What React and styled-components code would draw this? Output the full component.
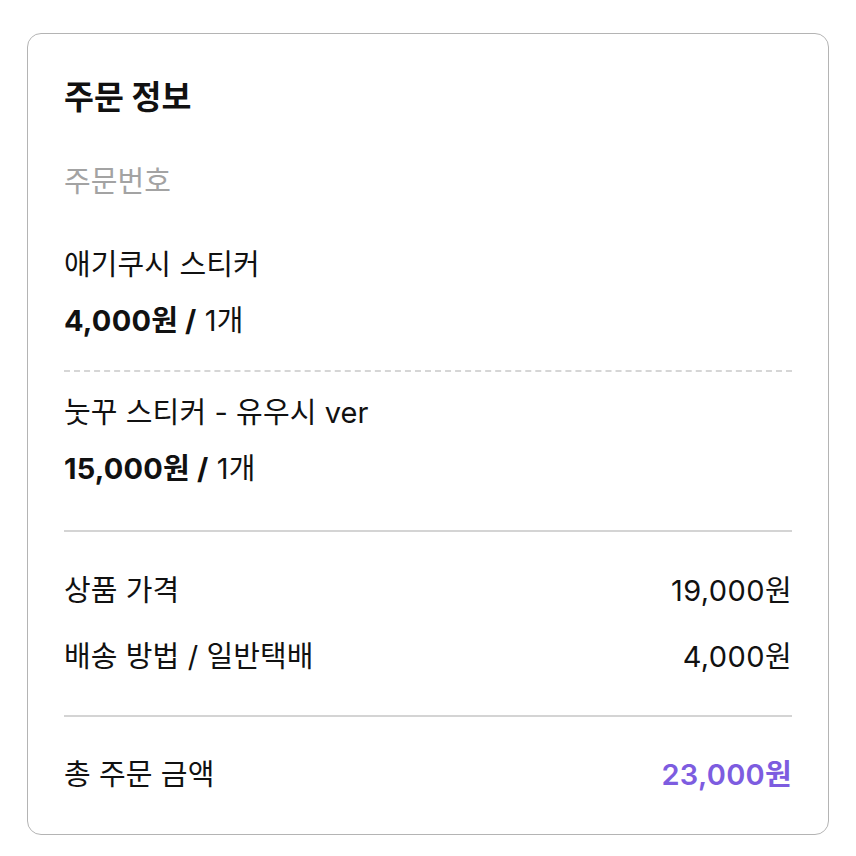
import React from "react";
import styled, { createGlobalStyle } from "styled-components";

const Global = createGlobalStyle`
  html, body { margin: 0; padding: 0; background: #fff; }
  body { font-family: "Inter", "Noto Sans CJK KR", "Noto Sans", sans-serif; color: #111; }
`;

const Page = styled.div`
  padding: 33px 27px;
`;

const Card = styled.section`
  box-sizing: border-box;
  height: 802px;
  border: 1.5px solid #b4b4b4;
  border-radius: 14px;
  padding: 44px 36px 0;
  display: flex;
  flex-direction: column;
`;

const Title = styled.h2`
  margin: 0;
  font-size: 32.5px;
  line-height: 40px;
  font-weight: 700;
  letter-spacing: 0;
`;

const Text = styled.div`
  font-size: 29px;
  line-height: 36px;
  letter-spacing: 0.1px;
  color: ${(p) => p.$color || "#111"};
  margin-top: ${(p) => p.$mt || 0}px;
`;

const Divider = styled.hr`
  margin: ${(p) => p.$mt}px 0 0;
  border: 0;
  border-top: 2px ${(p) => (p.$dashed ? "dashed" : "solid")} ${(p) => (p.$dashed ? "#d6d6d6" : "#d4d4d4")};
  height: 0;
`;

const Row = styled.div`
  display: flex;
  justify-content: space-between;
  align-items: center;
  margin-top: ${(p) => p.$mt}px;
  font-size: 29px;
  line-height: 36px;
  letter-spacing: 0.1px;
`;

const Amount = styled.span`
  font-weight: ${(p) => (p.$accent ? 600 : 400)};
  color: ${(p) => (p.$accent ? "#7d5ce0" : "#111")};
  letter-spacing: ${(p) => (p.$accent ? "0.3px" : "0.4px")};
`;

const Strong = styled.b`
  font-weight: 700;
  letter-spacing: 0.2px;
`;

const Price = ({ amount }) => (
  <Text $mt={20}>
    <Strong>{amount} /</Strong> 1개
  </Text>
);

export default function App() {
  return (
    <>
      <Global />
      <Page>
        <Card>
          <Title>주문 정보</Title>
          <Text $mt={46} $color="#a3a3a3">주문번호</Text>
          <Text $mt={47}>애기쿠시 스티커</Text>
          <Price amount="4,000원" />
          <Divider $dashed $mt={31} />
          <Text $mt={23}>눗꾸 스티커 - 유우시 ver</Text>
          <Price amount="15,000원" />
          <Divider $mt={43} />
          <Row $mt={41}>
            <span>상품 가격</span>
            <Amount>19,000원</Amount>
          </Row>
          <Row $mt={30}>
            <span>배송 방법 / 일반택배</span>
            <Amount>4,000원</Amount>
          </Row>
          <Divider $mt={40} />
          <Row $mt={40}>
            <span>총 주문 금액</span>
            <Amount $accent>23,000원</Amount>
          </Row>
        </Card>
      </Page>
    </>
  );
}
